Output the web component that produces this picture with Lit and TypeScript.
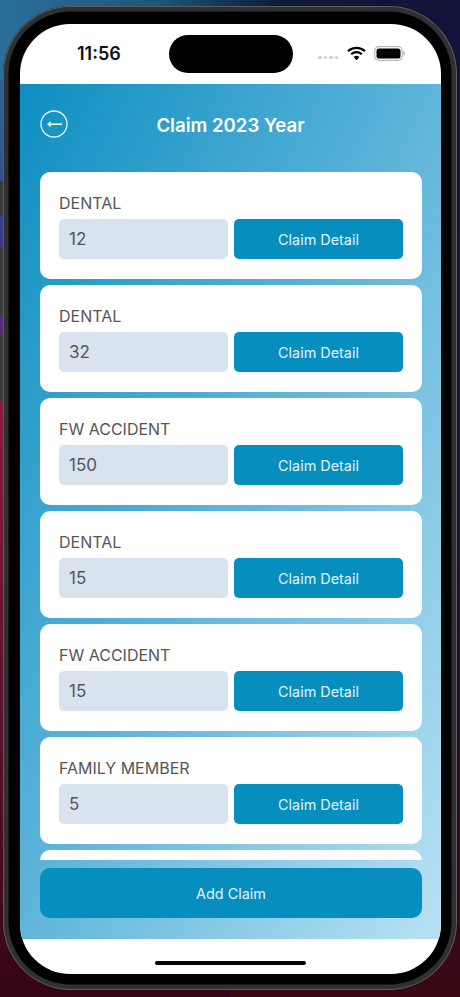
import { LitElement, html, css } from "lit";
import { customElement } from "lit/decorators.js";

const CLAIMS: [string, string][] = [
  ["DENTAL", "12"],
  ["DENTAL", "32"],
  ["FW ACCIDENT", "150"],
  ["DENTAL", "15"],
  ["FW ACCIDENT", "15"],
  ["FAMILY MEMBER", "5"],
];

@customElement("app-root")
export class AppRoot extends LitElement {
  static styles = css`
    :host {
      display: block;
      position: relative;
      width: 460px;
      height: 997px;
      overflow: hidden;
      box-sizing: border-box;
      padding: 6px 3px 7px;
      font-family: Inter, "Liberation Sans", sans-serif;
      background:
        linear-gradient(90deg, #2a6f9a 0%, #1d5678 35%, #0e1c38 60%, #12123a 100%) top / 100% 80px no-repeat,
        linear-gradient(180deg, #2a6c98 0, #2f5a8e 150px, #3a3a88 240px, #542a80 320px, #8a1a40 400px, #5e1030 700px, #340516 997px) left / 50% 100% no-repeat,
        linear-gradient(180deg, #12123a 0, #15153e 400px, #2a0c28 750px, #3a0814 997px) right / 50% 100% no-repeat;
    }
    .side {
      position: absolute;
      left: 0;
      width: 3px;
      background: #3c3c3e;
    }
    .s1 { top: 181px; height: 35px; }
    .s2 { top: 248px; height: 67px; }
    .s3 { top: 334px; height: 67px; }
    .device {
      height: 100%;
      box-sizing: border-box;
      display: flex;
      border-radius: 68px;
      background: #000;
      padding: 18px 16px 16px 17px;
      box-shadow: inset 0 0 0 1px #5c5c5f, inset 0 0 0 5.5px #303032;
    }
    .screen {
      flex: 1;
      min-width: 0;
      display: flex;
      flex-direction: column;
      border-radius: 50px;
      overflow: hidden;
      background: #fff;
    }
    .status {
      height: 60px;
      flex: none;
      box-sizing: border-box;
      display: flex;
      align-items: flex-start;
      padding: 11px 36px 0 57px;
    }
    .time {
      width: 92px;
      flex: none;
      margin-top: 9px;
      font-size: 18px;
      line-height: 20px;
      font-weight: 600;
      color: #111;
    }
    .island {
      width: 124px;
      height: 38px;
      flex: none;
      border-radius: 19px;
      background: #000;
    }
    .indicators {
      flex: 1;
      display: flex;
      justify-content: flex-end;
      align-items: center;
      gap: 8px;
      height: 38px;
      margin-top: -1px;
    }
    .dots {
      display: flex;
      gap: 2px;
      margin-top: 9px;
      margin-right: 1px;
    }
    .dots i {
      width: 3.5px;
      height: 3.5px;
      border-radius: 50%;
      background: #cfcfcf;
    }
    .main {
      flex: 1;
      min-height: 0;
      display: flex;
      flex-direction: column;
      background: linear-gradient(to bottom right, #0d8ec1 0%, #5fb5da 50%, #b8e2f3 100%);
    }
    .head {
      height: 88px;
      flex: none;
      box-sizing: border-box;
      display: grid;
      grid-template-columns: 60px 1fr 60px;
      align-items: center;
      padding: 0 0 8px 20px;
    }
    .back { display: block; }
    .title {
      text-align: center;
      font-size: 18.6px;
      font-weight: 600;
      color: #fff;
      margin-left: -20px;
      padding-top: 2px;
      white-space: nowrap;
    }
    .list {
      flex: 1;
      min-height: 0;
      overflow: hidden;
      display: flex;
      flex-direction: column;
      gap: 6px;
      padding: 0 19px 0 20px;
    }
    .card {
      flex: none;
      height: 107px;
      box-sizing: border-box;
      background: #fff;
      border-radius: 10px;
      padding: 20px 19px;
      display: flex;
      flex-direction: column;
      gap: 5px;
    }
    .label {
      font-size: 16px;
      line-height: 22px;
      color: #555;
    }
    .row {
      display: grid;
      grid-template-columns: 1fr 1fr;
      gap: 6px;
    }
    .value {
      height: 40px;
      box-sizing: border-box;
      background: #d9e3ef;
      border-radius: 5px;
      padding: 0 10px;
      display: flex;
      align-items: center;
      font-size: 17px;
      color: #555;
    }
    .btn {
      display: flex;
      align-items: center;
      justify-content: center;
      background: #068ebe;
      color: #e3f2f8;
      font-size: 14.4px;
      border-radius: 5px;
    }
    .detail { height: 40px; }
    .foot {
      flex: none;
      padding: 8px 19px 21px 20px;
    }
    .add {
      height: 50px;
      border-radius: 10px;
    }
    .home {
      height: 35px;
      flex: none;
      display: flex;
      justify-content: center;
      align-items: flex-start;
      padding-top: 22px;
      box-sizing: border-box;
    }
    .home i {
      width: 151px;
      height: 4px;
      border-radius: 2px;
      background: #000;
    }
  `;

  render() {
    return html`
      <span class="side s1"></span><span class="side s2"></span><span class="side s3"></span>
      <div class="device">
        <div class="screen">
          <div class="status">
            <div class="time">11:56</div>
            <div class="island"></div>
            <div class="indicators">
              <div class="dots"><i></i><i></i><i></i><i></i></div>
              <svg width="19" height="15" viewBox="0 0 19 15">
                <path d="M1 5.2 A12.5 12.5 0 0 1 18 5.2" fill="none" stroke="#000" stroke-width="2.2"/>
                <path d="M4.2 8.2 A8 8 0 0 1 14.8 8.2" fill="none" stroke="#000" stroke-width="2.2"/>
                <path d="M6.6 11 L9.5 14.2 L12.4 11 A4.4 4.4 0 0 0 6.6 11 Z" fill="#000"/>
              </svg>
              <svg width="31" height="15" viewBox="0 0 31 15">
                <rect x="0.7" y="0.7" width="27.6" height="13.6" rx="4" fill="none" stroke="#b9b9b9" stroke-width="1.2"/>
                <rect x="2.5" y="2.5" width="24" height="10" rx="2.6" fill="#000"/>
                <rect x="29.3" y="5.5" width="1.5" height="4" rx="0.7" fill="#b9b9b9"/>
              </svg>
            </div>
          </div>
          <div class="main">
            <div class="head">
              <svg class="back" width="28" height="28" viewBox="0 0 28 28">
                <circle cx="14" cy="14" r="13" fill="none" stroke="#e4f3fa" stroke-width="1.3"/>
                <path d="M9 14.2 H22" stroke="#fff" stroke-width="1.5"/>
                <path d="M7 14.2 L10.6 11.2 V17.2 Z" fill="#fff"/>
              </svg>
              <div class="title">Claim 2023 Year</div>
              <span></span>
            </div>
            <div class="list">
              ${CLAIMS.map(
                ([name, amount]) => html`
                  <div class="card">
                    <div class="label">${name}</div>
                    <div class="row">
                      <div class="value">${amount}</div>
                      <div class="btn detail">Claim Detail</div>
                    </div>
                  </div>
                `
              )}
              <div class="card"></div>
            </div>
            <div class="foot"><div class="btn add">Add Claim</div></div>
          </div>
          <div class="home"><i></i></div>
        </div>
      </div>
    `;
  }
}
